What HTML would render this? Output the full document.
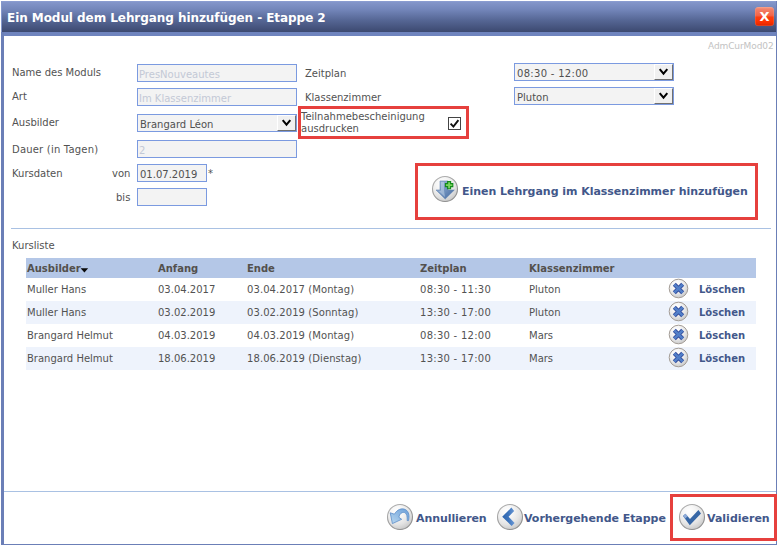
<!DOCTYPE html>
<html lang="de">
<head>
<meta charset="utf-8">
<title>Ein Modul dem Lehrgang hinzufügen - Etappe 2</title>
<style>
html,body{margin:0;padding:0;background:#fff;}
body{width:777px;height:545px;position:relative;overflow:hidden;
  font-family:"DejaVu Sans","Liberation Sans",sans-serif;font-size:10px;color:#525252;}
.abs{position:absolute;}
.t{position:absolute;white-space:nowrap;line-height:12px;}
#frameL{left:1px;top:32px;width:3px;height:513px;background:#6b7fb7;}
#frameR{left:776px;top:1px;width:1px;height:544px;background:#6b7fb7;}
#frameB{left:1px;top:544px;width:776px;height:1px;background:#6b7fb7;}
#titlebar{left:1px;top:1px;width:776px;height:31px;box-sizing:border-box;border-left:1px solid #8497cb;border-top:1px solid #8a9cd0;
  background:linear-gradient(#8496ca 0%,#7386ba 25%,#566795 60%,#3c4970 100%);}
#band{left:1px;top:32px;width:776px;height:4px;background:#6f84be;}
#title{left:7px;top:11px;font-weight:bold;font-size:12px;line-height:15px;color:#fff;letter-spacing:-0.06px;}
#close{left:755px;top:7px;width:19px;height:18.5px;border-radius:3.5px;
  background:linear-gradient(#f49c88 0%,#f28068 12%,#f3654a 44%,#fb3d10 54%,#ff3300 75%,#ee2a00 90%,#cf2200 100%);
  box-shadow:inset 0 0 0 0.5px rgba(255,190,160,0.35);
  color:#fff;font-weight:bold;font-size:13px;line-height:18px;text-align:center;}
#code{left:708px;top:40px;font-size:9px;color:#c2c2c2;letter-spacing:-0.1px;}
.inp{position:absolute;box-sizing:border-box;height:18px;border:1px solid #7b9ae0;background:#f3f3f3;
  font-size:10px;line-height:18px;padding-left:1px;padding-top:0.5px;white-space:nowrap;color:#c3c9d6;}
.sel{color:#505050;padding-left:2px;}
.ddb{position:absolute;right:0;top:0;width:19px;height:16px;box-sizing:border-box;background:#f0f0f0;
  border-top:1px solid #fdfdfd;border-left:1px solid #fff;border-right:1px solid #707070;border-bottom:1px solid #707070;}
.ddb svg{position:absolute;left:0;top:0;}
.red{position:absolute;box-sizing:border-box;border:3px solid #e6403d;}
.hr{position:absolute;height:1px;background:#a9c1e3;}
.hd{position:absolute;left:26px;top:258px;width:730px;height:20px;background:#b4c7e7;}
.row{position:absolute;left:26px;width:730px;height:23px;}
.alt{background:#eef3fc;}
.h{font-weight:bold;color:#53504d;}
.tm{letter-spacing:0.27px;}
.dt{letter-spacing:0.08px;}
.lk{font-weight:bold;color:#42578a;}
.btn{font-weight:bold;font-size:11px;line-height:14px;color:#42578a;}
</style>
</head>
<body>
<div class="abs" id="titlebar"></div>
<div class="abs" id="band"></div>
<div class="abs" id="frameL"></div>
<div class="abs" id="frameR"></div>
<div class="abs" id="frameB"></div>
<div class="t" id="title">Ein Modul dem Lehrgang hinzufügen - Etappe 2</div>
<div class="abs" id="close"><span style="position:relative;top:0.5px;">X</span></div>
<div class="t" id="code">AdmCurMod02</div>

<!-- form -->
<div class="t" id="l1" style="left:12px;top:67px;">Name des Moduls</div>
<div class="inp" style="left:137px;top:64px;width:160px;">PresNouveautes</div>
<div class="t" id="l2" style="left:12px;top:91px;">Art</div>
<div class="inp" style="left:137px;top:88px;width:160px;">Im Klassenzimmer</div>
<div class="t" id="l3" style="left:12px;top:117px;">Ausbilder</div>
<div class="inp sel" style="left:137px;top:114px;width:160px;">Brangard Léon<div class="ddb"><svg width="17" height="14" viewBox="0 0 17 14"><path d="M4.7 4.1 L8.5 8.7 L12.3 4.1" fill="none" stroke="#000" stroke-width="2"/></svg></div></div>
<div class="t" id="l4" style="left:12px;top:144px;letter-spacing:0.2px;">Dauer (in Tagen)</div>
<div class="inp" style="left:137px;top:140px;width:160px;">2</div>
<div class="t" id="l5" style="left:12px;top:168px;">Kursdaten</div>
<div class="t" id="l6" style="left:112px;top:168px;">von</div>
<div class="inp sel" style="left:137px;top:164px;width:70px;">01.07.2019</div>
<div class="t" id="l7" style="left:208px;top:168px;">*</div>
<div class="t" id="l8" style="left:116px;top:192px;">bis</div>
<div class="inp" style="left:137px;top:188px;width:70px;"></div>

<div class="t" id="m1" style="left:305px;top:68px;">Zeitplan</div>
<div class="t" id="m2" style="left:305px;top:92px;">Klassenzimmer</div>
<div class="red" style="left:298px;top:106px;width:171px;height:33px;"></div>
<div class="t" id="m3" style="left:301px;top:111px;line-height:12px;white-space:normal;width:130px;">Teilnahmebescheinigung ausdrucken</div>
<div class="abs" id="cb" style="left:448px;top:117px;width:13px;height:13px;box-sizing:border-box;border:1px solid #444;background:#fff;"><svg class="abs" style="left:0;top:0" width="11" height="11" viewBox="0 0 11 11"><path d="M1.6 5.6 L4.4 8.6 L9.4 2.2" fill="none" stroke="#111" stroke-width="1.9"/></svg></div>

<div class="inp sel" style="left:514px;top:63px;width:160px;"><span style="letter-spacing:0.3px">08:30 - 12:00</span><div class="ddb"><svg width="17" height="14" viewBox="0 0 17 14"><path d="M4.7 4.1 L8.5 8.7 L12.3 4.1" fill="none" stroke="#000" stroke-width="2"/></svg></div></div>
<div class="inp sel" style="left:514px;top:87px;width:160px;">Pluton<div class="ddb"><svg width="17" height="14" viewBox="0 0 17 14"><path d="M4.7 4.1 L8.5 8.7 L12.3 4.1" fill="none" stroke="#000" stroke-width="2"/></svg></div></div>

<!-- add button -->
<div class="red" style="left:415px;top:163px;width:343px;height:57px;"></div>
<div class="t btn" id="b1" style="left:462px;top:185px;letter-spacing:-0.035px;">Einen Lehrgang im Klassenzimmer hinzufügen</div>

<div class="hr" style="left:11px;top:228px;width:760px;"></div>
<div class="t" id="kl" style="left:12px;top:240px;">Kursliste</div>

<!-- table -->
<div class="hd"></div>
<div class="row" style="top:278px;"></div>
<div class="row alt" style="top:301px;"></div>
<div class="row" style="top:324px;"></div>
<div class="row alt" style="top:347px;"></div>

<div class="t h" id="h1" style="left:27px;top:263px;">Ausbilder</div>
<svg class="abs" style="left:80px;top:268px;" width="9" height="5" viewBox="0 0 9 5"><path d="M0.6 0.2 H8.2 L4.4 4.5 Z" fill="#0a0a0a"/></svg>
<div class="t h" id="h2" style="left:158px;top:263px;">Anfang</div>
<div class="t h" id="h3" style="left:247px;top:263px;">Ende</div>
<div class="t h" id="h4" style="left:420px;top:263px;">Zeitplan</div>
<div class="t h" id="h5" style="left:529px;top:263px;">Klassenzimmer</div>

<div class="t" id="r1a" style="left:27px;top:284px;">Muller Hans</div>
<div class="t" style="left:158px;top:284px;">03.04.2017</div>
<div class="t dt" id="r1c" style="left:247px;top:284px;">03.04.2017 (Montag)</div>
<div class="t tm" id="r1d" style="left:420px;top:284px;">08:30 - 11:30</div>
<div class="t" style="left:529px;top:284px;">Pluton</div>
<div class="t lk" id="r1f" style="left:699px;top:284px;">Löschen</div>

<div class="t" style="left:27px;top:307px;">Muller Hans</div>
<div class="t" style="left:158px;top:307px;">03.02.2019</div>
<div class="t dt" style="left:247px;top:307px;">03.02.2019 (Sonntag)</div>
<div class="t tm" style="left:420px;top:307px;">13:30 - 17:00</div>
<div class="t" style="left:529px;top:307px;">Pluton</div>
<div class="t lk" style="left:699px;top:307px;">Löschen</div>

<div class="t" style="left:27px;top:330px;">Brangard Helmut</div>
<div class="t" style="left:158px;top:330px;">04.03.2019</div>
<div class="t dt" style="left:247px;top:330px;">04.03.2019 (Montag)</div>
<div class="t tm" style="left:420px;top:330px;">08:30 - 12:00</div>
<div class="t" style="left:529px;top:330px;">Mars</div>
<div class="t lk" style="left:699px;top:330px;">Löschen</div>

<div class="t" style="left:27px;top:353px;">Brangard Helmut</div>
<div class="t" style="left:158px;top:353px;">18.06.2019</div>
<div class="t dt" style="left:247px;top:353px;">18.06.2019 (Dienstag)</div>
<div class="t tm" style="left:420px;top:353px;">13:30 - 17:00</div>
<div class="t" style="left:529px;top:353px;">Mars</div>
<div class="t lk" style="left:699px;top:353px;">Löschen</div>

<!-- footer -->
<div class="hr" style="left:4px;top:491px;width:772px;"></div>
<div class="t btn" id="f1" style="left:416px;top:511.5px;letter-spacing:-0.08px;">Annullieren</div>
<div class="t btn" id="f2" style="left:524px;top:511.5px;letter-spacing:-0.04px;">Vorhergehende Etappe</div>
<div class="red" style="left:670px;top:494px;width:107px;height:47px;"></div>
<div class="t btn" id="f3" style="left:707px;top:511.5px;">Validieren</div>

<!-- icons -->
<svg class="abs" style="left:0;top:0;" width="777" height="545" viewBox="0 0 777 545">
<defs>
<radialGradient id="sph" cx="0.38" cy="0.28" r="0.8">
<stop offset="0" stop-color="#ffffff"/><stop offset="0.3" stop-color="#f6f6f6"/><stop offset="0.65" stop-color="#e4e4e4"/><stop offset="1" stop-color="#c2c2c2"/>
</radialGradient>
<linearGradient id="rim" x1="0" y1="0" x2="0.6" y2="1"><stop offset="0" stop-color="#b4b4b4"/><stop offset="1" stop-color="#8e8e8e"/></linearGradient>
<linearGradient id="und" x1="0" y1="1" x2="1" y2="0"><stop offset="0" stop-color="#b9d8f0"/><stop offset="1" stop-color="#6a9ed8"/></linearGradient>
<linearGradient id="chv" x1="0" y1="0" x2="1" y2="0"><stop offset="0" stop-color="#2e65ae"/><stop offset="0.5" stop-color="#3d74bc"/><stop offset="1" stop-color="#6d9ad6"/></linearGradient>
<linearGradient id="bl" x1="0" y1="0" x2="1" y2="1"><stop offset="0" stop-color="#a8bedb"/><stop offset="0.45" stop-color="#7797c2"/><stop offset="1" stop-color="#42679d"/></linearGradient>
<linearGradient id="bl2" x1="0" y1="0" x2="0" y2="1"><stop offset="0" stop-color="#6f9ad2"/><stop offset="1" stop-color="#2f62a8"/></linearGradient>
<g id="ball"><circle cx="0" cy="0" r="12.5" fill="url(#sph)" stroke="url(#rim)" stroke-width="1.1"/></g>
<g id="del"><circle cx="0" cy="0" r="9.3" fill="url(#sph)" stroke="#a39c96" stroke-width="1"/>
<path d="M-4.2 -4.2 L4.2 4.2 M4.2 -4.2 L-4.2 4.2" stroke="#30499a" stroke-width="4.2" fill="none"/>
<path d="M-4.2 -4.2 L4.2 4.2 M4.2 -4.2 L-4.2 4.2" stroke="#527fc8" stroke-width="2.6" fill="none"/></g>
</defs>
<!-- add -->
<use href="#ball" x="445" y="189"/>
<path d="M440 181 H448 V190 H454.3 L445.2 199 L436 190 H440 Z" fill="url(#bl)" stroke="#6486b4" stroke-width="0.6"/>
<path d="M441 182 H444 V190.5 L445 197 L438.5 190.8 H441 Z" fill="#c3d5ea" opacity="0.55"/>
<path d="M447.6 181.6 H450.6 V183.6 H452.8 V186.6 H450.6 V188.8 H447.6 V186.6 H445.4 V183.6 H447.6 Z" fill="#7ad45e" stroke="#128a1a" stroke-width="1.1"/>
<!-- delete -->
<use href="#del" x="678.5" y="288.5"/>
<use href="#del" x="678.5" y="311.5"/>
<use href="#del" x="678.5" y="334.5"/>
<use href="#del" x="678.5" y="357.5"/>
<!-- cancel -->
<use href="#ball" x="400" y="517"/>
<path d="M390.2 512.8 L392.4 523.6 L401.7 519.3 L398.9 517.3 C399.3 514 402 511.9 404.4 512.5 C407 513.2 407.4 517 407.2 520.6 L408.5 520.6 C409.6 516 409 511.5 405.5 509.6 C401.5 507.6 396.8 509.8 394.4 514.2 Z" fill="url(#und)" stroke="#5a8cc8" stroke-width="0.8" stroke-linejoin="round"/>
<!-- previous -->
<use href="#ball" x="510" y="517"/>
<path d="M511.4 507.6 L514.2 511 L508.6 516.8 L514.6 523 L511.7 526 L502.2 516.8 Z" fill="url(#chv)"/>
<!-- validate -->
<use href="#ball" x="692" y="517"/>
<path d="M683 516 L685.4 513.8 L690 519 L698.4 510 L701 513.4 L689.8 525.2 Z" fill="#3767a6"/>
<path d="M683 516 L685.4 513.8 L687.6 516.3 L685.3 518.5 Z" fill="#8fabd8"/>
</svg>
</body>
</html>
